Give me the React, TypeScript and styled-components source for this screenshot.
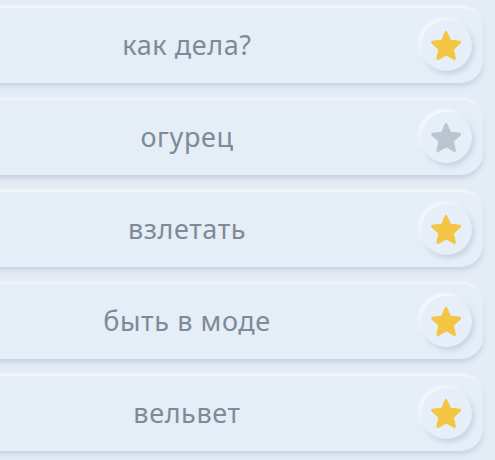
import React from "react";
import styled, { createGlobalStyle } from "styled-components";

const Global = createGlobalStyle`
  html, body { margin: 0; padding: 0; background: #e4ecf6; }
  body { width: 495px; height: 460px; overflow: hidden; font-family: "Noto Sans", "Open Sans", sans-serif; }
`;

const List = styled.div`
  display: flex;
  flex-direction: column;
  gap: 17px;
  padding-top: 8px;
  width: 495px;
`;

const Card = styled.div`
  display: flex;
  align-items: center;
  height: 75px;
  margin-left: -40px;
  width: 523px;
  box-sizing: border-box;
  padding: 0 11px 0 40px;
  background: #e5edf7;
  border-radius: 0 22px 22px 0;
  box-shadow: 0 3px 5px rgba(160, 175, 195, 0.45), 0 -2px 3px rgba(255, 255, 255, 0.8);
`;

const Label = styled.div`
  flex: 1;
  text-align: center;
  padding-right: 47px;
  padding-bottom: 2px;
  font-size: 27px;
  font-weight: 400;
  color: #7f8a96;
  letter-spacing: 0.6px;
`;

const StarButton = styled.div`
  width: 51px;
  height: 51px;
  border-radius: 50%;
  background: #e6eef8;
  display: flex;
  align-items: center;
  justify-content: center;
  box-shadow: 2px 3px 5px rgba(160, 175, 195, 0.45), -2px -2px 4px rgba(255, 255, 255, 0.9);
`;

const Star = ({ active }: { active: boolean }) => (
  <svg width="35" height="35" viewBox="0 0 24 24">
    <path
      d="M12 2.6l2.7 5.8 6.3.7c.6.1.8.8.4 1.2l-4.7 4.3 1.3 6.2c.1.6-.5 1-1 .7L12 18.3l-5.5 3.2c-.5.3-1.1-.1-1-.7l1.3-6.2-4.7-4.3c-.4-.4-.2-1.1.4-1.2l6.3-.7L11.3 2.6c.2-.5.5-.5.7 0z"
      fill={active ? "#f4c543" : "#bcc5cf"}
      stroke={active ? "#f4c543" : "#bcc5cf"}
      strokeWidth="0.8"
      strokeLinejoin="round"
    />
  </svg>
);

const items = [
  { text: "как дела?", active: true },
  { text: "огурец", active: false },
  { text: "взлетать", active: true },
  { text: "быть в моде", active: true },
  { text: "вельвет", active: true },
];

export default function App() {
  return (
    <>
      <Global />
      <List>
        {items.map((it) => (
          <Card key={it.text}>
            <Label>{it.text}</Label>
            <StarButton>
              <Star active={it.active} />
            </StarButton>
          </Card>
        ))}
      </List>
    </>
  );
}
